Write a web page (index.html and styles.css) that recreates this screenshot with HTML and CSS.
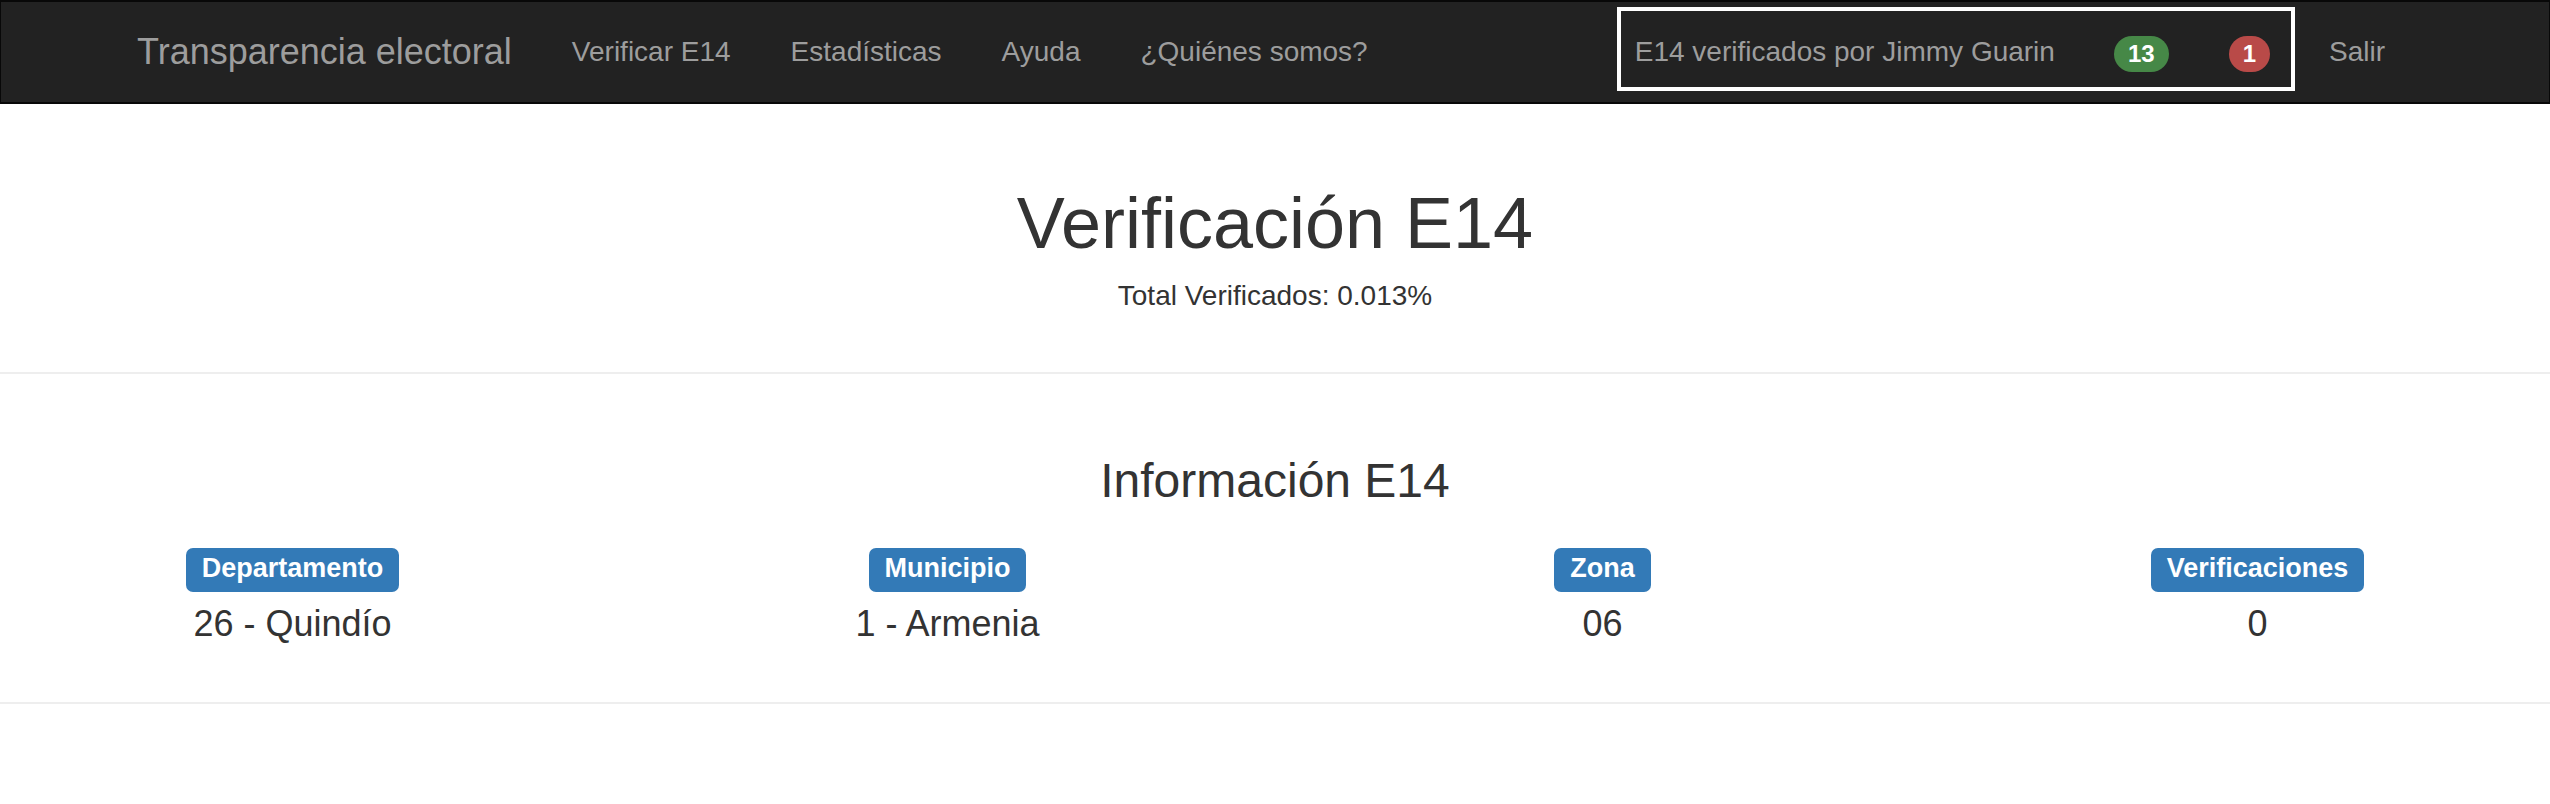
FILE: index.html
```html
<!DOCTYPE html>
<html lang="es">
<head>
<meta charset="utf-8">
<title>Transparencia electoral</title>
<link rel="stylesheet" href="styles.css">
</head>
<body>
<nav class="navbar">
  <div class="nav-container">
    <a class="brand" href="#">Transparencia electoral</a>
    <ul class="nav">
      <li><a class="nav-link" href="#">Verificar E14</a></li>
      <li><a class="nav-link" href="#">Estadísticas</a></li>
      <li><a class="nav-link" href="#">Ayuda</a></li>
      <li><a class="nav-link" href="#">¿Quiénes somos?</a></li>
    </ul>
    <ul class="nav nav-right">
      <li class="stat-box"><a class="stat-link" href="#">E14 verificados por Jimmy Guarin<span class="badge badge-ok">13</span><span class="badge badge-bad">1</span></a></li>
      <li><a class="nav-link" href="#">Salir</a></li>
    </ul>
  </div>
</nav>

<main class="page">
  <section class="hero">
    <h1 class="title">Verificación E14</h1>
    <p class="subtitle">Total Verificados: 0.013%</p>
  </section>
  <hr class="rule rule-top">
  <section class="info">
    <h3 class="info-title">Información E14</h3>
    <div class="info-grid">
      <div class="info-col">
        <span class="label">Departamento</span>
        <div class="value">26 - Quindío</div>
      </div>
      <div class="info-col">
        <span class="label">Municipio</span>
        <div class="value">1 - Armenia</div>
      </div>
      <div class="info-col">
        <span class="label">Zona</span>
        <div class="value">06</div>
      </div>
      <div class="info-col">
        <span class="label">Verificaciones</span>
        <div class="value">0</div>
      </div>
    </div>
  </section>
  <hr class="rule rule-bottom">
</main>
</body>
</html>
```

FILE: styles.css
```css
* {
  box-sizing: border-box;
}

html, body {
  margin: 0;
  padding: 0;
  background: #fff;
}

body {
  font-family: "Liberation Sans", Arial, Helvetica, sans-serif;
  font-size: 28px;
  line-height: 40px;
  color: #333;
  overflow-x: hidden;
}

a {
  text-decoration: none;
}

/* ---------- Navbar ---------- */
.navbar {
  background: #222;
  border-style: solid;
  border-color: #080808;
  border-width: 2px 1px 2px 1px;
  height: 104px;
}

.nav-container {
  width: 2340px;
  margin: 0 auto;
  padding: 0 30px;
  display: flex;
  align-items: flex-start;
}

.brand {
  display: block;
  margin-left: -28px;
  padding: 30px 30px;
  font-size: 36px;
  line-height: 40px;
  color: #9d9d9d;
  white-space: nowrap;
}

.nav {
  list-style: none;
  margin: 0;
  padding: 0;
  display: flex;
  align-items: flex-start;
}

.nav-right {
  margin-left: auto;
}

.nav-link {
  display: block;
  padding: 30px 30px;
  font-size: 28px;
  line-height: 40px;
  color: #9d9d9d;
  white-space: nowrap;
}

.stat-box {
  margin-top: 5px;
  margin-right: 4px;
  border: 4px solid #fff;
}

.stat-link {
  display: block;
  height: 76px;
  padding: 21px 21px 15px 14px;
  font-size: 28px;
  line-height: 40px;
  color: #9d9d9d;
  white-space: nowrap;
}

.badge {
  display: inline-block;
  vertical-align: middle;
  padding: 6px 14px;
  font-size: 24px;
  font-weight: bold;
  line-height: 24px;
  color: #fff;
  border-radius: 20px;
  text-align: center;
}

.badge-ok {
  background: #468847;
  margin-left: 59px;
}

.badge-bad {
  background: #b94a48;
  margin-left: 60px;
}

/* ---------- Hero ---------- */
.hero {
  text-align: center;
}

.title {
  margin: 80px 0 0;
  font-size: 72px;
  line-height: 79px;
  font-weight: normal;
  color: #333;
}

.subtitle {
  margin: 13px 0 0;
  font-size: 28px;
  line-height: 40px;
  color: #333;
}

.rule {
  border: 0;
  border-top: 2px solid #eee;
  margin: 0;
  height: 0;
}

.rule-top {
  margin-top: 56px;
}

.rule-bottom {
  margin-top: 58px;
}

/* ---------- Info ---------- */
.info {
  overflow: hidden;
  text-align: center;
}

.info-title {
  margin: 80px 0 0;
  font-size: 48px;
  line-height: 53px;
  font-weight: normal;
  color: #333;
}

.info-grid {
  display: grid;
  grid-template-columns: repeat(4, 1fr);
  margin: 41px -35px 0;
}

.info-col {
  text-align: center;
}

.label {
  display: inline-block;
  padding: 7px 16px 10px;
  font-size: 27px;
  font-weight: bold;
  line-height: 27px;
  color: #fff;
  background: #337ab7;
  border-radius: 7px;
  vertical-align: top;
}

.value {
  margin-top: 12px;
  font-size: 36px;
  line-height: 40px;
  color: #333;
}
```
